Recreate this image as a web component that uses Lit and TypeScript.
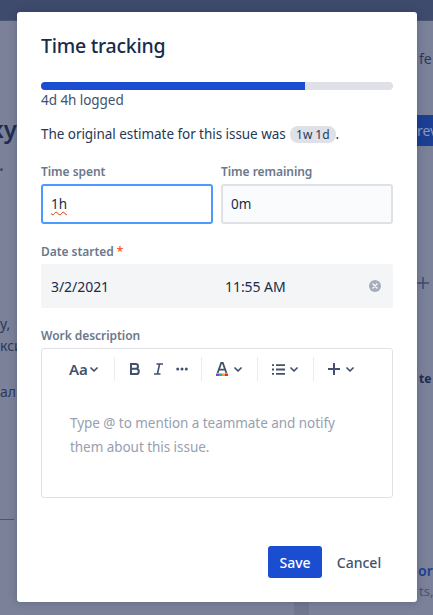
import { LitElement, html, css, svg } from "lit";
import { customElement } from "lit/decorators.js";

const chevron = svg`<path d="M1 1 L4 4 L7 1" fill="none" stroke="#42526e" stroke-width="1.7" stroke-linecap="round" stroke-linejoin="round"/>`;

@customElement("app-root")
export class AppRoot extends LitElement {
  static styles = css`
    :host {
      display: block;
      position: relative;
      width: 433px;
      height: 615px;
      overflow: hidden;
      background: #7b8199;
      font-family: "Noto Sans", sans-serif;
      color: #172b4d;
    }
    .topbar {
      height: 20px;
      background: #3f4b6c;
      border-bottom: 1px solid #4a5576;
    }
    .page {
      display: flex;
      justify-content: space-between;
      height: 594px;
    }
    .left {
      width: 17px;
      overflow: hidden;
      white-space: nowrap;
      color: #202c50;
      display: flex;
      flex-direction: column;
      align-items: flex-start;
    }
    .left .heading {
      align-self: flex-end;
      font-size: 24px;
      font-weight: 600;
      margin-top: 93px;
      line-height: 30px;
    }
    .left .dot {
      width: 3px;
      height: 3px;
      border-radius: 50%;
      background: #3f4b6c;
      margin-top: 24px;
    }
    .left .copy {
      font-size: 14px;
      line-height: 20px;
      color: #2c3859;
    }
    .left .first { margin-top: 143px; }
    .left .second { margin-top: 2px; }
    .left .third { margin-top: 26px; }
    .left .tiny {
      height: 1px;
      width: 14px;
      background: #4a5576;
      margin-top: 117px;
    }
    .right {
      width: 16px;
      overflow: hidden;
      white-space: nowrap;
      display: flex;
      flex-direction: column;
      font-size: 14px;
      color: #2c3859;
    }
    .right .fe { margin-top: 28px; padding-left: 2px; line-height: 20px; }
    .right .rev {
      margin-top: 46px;
      height: 31px;
      line-height: 31px;
      background: #1c3f93;
      color: #8d99bb;
    }
    .right .plus { margin-top: 130px; height: 14px; }
    .right .plus svg { display: block; }
    .right .te {
      margin-top: 81px;
      padding-left: 2px;
      font-size: 12px;
      font-weight: 700;
      line-height: 16px;
      color: #1d2a4e;
    }
    .right .or {
      margin-top: 174px;
      padding-left: 1px;
      font-weight: 600;
      line-height: 20px;
      color: #1c3f93;
    }
    .right .ts {
      margin-top: 2px;
      padding-left: 2px;
      line-height: 16px;
      font-size: 13px;
      color: #4a5576;
    }
    .patch {
      position: absolute;
      left: 294px;
      top: 602px;
      width: 15px;
      height: 13px;
      background: #71778f;
    }

    .modal {
      position: absolute;
      left: 17px;
      top: 12px;
      width: 400px;
      height: 590px;
      box-sizing: border-box;
      padding: 20px 24px 0;
      background: #fff;
      border-radius: 3px;
      box-shadow: 0 0 8px rgba(9, 30, 66, 0.25);
      display: flex;
      flex-direction: column;
      font-size: 13.5px;
      letter-spacing: -0.05px;
    }
    h1 {
      margin: 0;
      font-size: 19.5px;
      font-weight: 500;
      letter-spacing: -0.25px;
      line-height: 28px;
    }
    .bar {
      height: 8px;
      margin-top: 22px;
      border-radius: 4px;
      overflow: hidden;
      background: #dfe1e6;
    }
    .bar div { height: 100%; width: 75%; background: #1a4dcf; }
    .logged { line-height: 20px; color: #42526e; }
    .estimate { line-height: 20px; margin: 14px 0 0; color: #253858; }
    .chip {
      display: inline-block;
      background: #dfe1e6;
      border-radius: 8px;
      font-size: 12px;
      line-height: 17px;
      padding: 0 6px;
      margin-left: 1px;
      color: #253858;
    }
    .row {
      display: grid;
      grid-template-columns: 172px 172px;
      gap: 8px;
      margin-top: 19px;
    }
    label {
      display: block;
      font-size: 12px;
      font-weight: 600;
      line-height: 18px;
      color: #6b778c;
    }
    .req { color: #ff5630; margin-left: 3px; }
    .input {
      box-sizing: border-box;
      height: 40px;
      margin-top: 3px;
      padding: 0 8px;
      border: 2px solid #dfe1e6;
      border-radius: 3px;
      background: #fafbfc;
      line-height: 36px;
      color: #172b4d;
    }
    .input.focus { border-color: #4c9aff; background: #fff; }
    .squiggle {
      text-decoration: underline wavy #de350b 1px;
      text-underline-offset: 2px;
    }
    .date-label { margin-top: 19px; }
    .date {
      display: flex;
      align-items: center;
      height: 44px;
      margin-top: 3px;
      padding: 0 12px 0 10px;
      background: #f4f5f7;
      border-radius: 3px;
      font-size: 14px;
    }
    .date .d { width: 174px; }
    .date .t { flex: 1; }
    .date svg { display: block; }
    .desc-label { margin-top: 19px; }
    .editor {
      box-sizing: border-box;
      height: 150px;
      margin-top: 3px;
      border: 1px solid #dfe1e6;
      border-radius: 3px;
    }
    .toolbar {
      display: flex;
      align-items: center;
      height: 40px;
      padding-left: 27px;
    }
    .toolbar svg { display: block; flex: none; }
    .sep { width: 1px; height: 24px; background: #ebecf0; flex: none; }
    .aa {
      width: 19px;
      font-size: 15px;
      font-weight: 600;
      color: #42526e;
      line-height: 20px;
    }
    .toolbar .ml2 { margin-left: 2px; }
    .toolbar .ml5 { margin-left: 5px; }
    .toolbar .ml6 { margin-left: 6px; }
    .toolbar .ml13 { margin-left: 13px; }
    .toolbar .ml14 { margin-left: 14px; }
    .toolbar .ml15 { margin-left: 15px; }
    .toolbar .mr13 { margin-right: 13px; }
    .toolbar .mr15 { margin-right: 15px; }
    .toolbar .mr16 { margin-right: 16px; }
    .placeholder {
      margin: 22px 28px 0;
      font-size: 13.5px;
      line-height: 24px;
      color: #97a0af;
    }
    .actions {
      display: flex;
      justify-content: flex-end;
      align-items: center;
      margin-top: 48px;
    }
    .btn {
      border: 0;
      background: none;
      font: inherit;
      font-size: 14px;
      font-weight: 500;
      height: 32px;
      border-radius: 3px;
      padding: 0;
    }
    .save { width: 54px; background: #1a4dcf; color: #fff; }
    .cancel { width: 71px; padding-left: 3px; color: #42526e; }
  `;

  render() {
    return html`
      <div class="topbar"></div>
      <div class="page">
        <div class="left">
          <div class="heading">ку</div>
          <div class="dot"></div>
          <div class="copy first">у,</div>
          <div class="copy second">кси</div>
          <div class="copy third">алк</div>
          <div class="tiny"></div>
        </div>
        <div class="right">
          <div class="fe">fe</div>
          <div class="rev">rev</div>
          <div class="plus">
            <svg width="12" height="14" viewBox="0 0 12 14"><path d="M0 7h12M6 1v12" stroke="#3f4b6c" stroke-width="1.5"/></svg>
          </div>
          <div class="te">te</div>
          <div class="or">or</div>
          <div class="ts">ts,</div>
        </div>
      </div>
      <div class="patch"></div>

      <div class="modal">
        <h1>Time tracking</h1>
        <div class="bar"><div></div></div>
        <div class="logged">4d 4h logged</div>
        <p class="estimate">The original estimate for this issue was <span class="chip">1w 1d</span>.</p>
        <div class="row">
          <div>
            <label>Time spent</label>
            <div class="input focus"><span class="squiggle">1h</span></div>
          </div>
          <div>
            <label>Time remaining</label>
            <div class="input">0m</div>
          </div>
        </div>
        <label class="date-label">Date started<span class="req">*</span></label>
        <div class="date">
          <span class="d">3/2/2021</span>
          <span class="t">11:55 AM</span>
          <svg width="12" height="12" viewBox="0 0 12 12">
            <circle cx="6" cy="6" r="6" fill="#a5adba"/>
            <path d="M4 4l4 4M8 4l-4 4" stroke="#f4f5f7" stroke-width="1.6" stroke-linecap="round"/>
          </svg>
        </div>
        <label class="desc-label">Work description</label>
        <div class="editor">
          <div class="toolbar">
            <span class="aa">Aa</span>
            <svg class="ml2 mr16" width="8" height="5" viewBox="0 0 8 5">${chevron}</svg>
            <div class="sep"></div>
            <svg class="ml15" width="10" height="12" viewBox="0 0 10 12"><path d="M1 1h4.6a2.4 2.4 0 0 1 0 4.8H1zM1 5.8h5.2a2.6 2.6 0 0 1 0 5.2H1z" fill="none" stroke="#42526e" stroke-width="2"/></svg>
            <svg class="ml14" width="9" height="12" viewBox="0 0 9 12"><path d="M2.5 1H9M0 11h6.5M5.6 1L3.4 11" fill="none" stroke="#42526e" stroke-width="1.6"/></svg>
            <svg class="ml13 mr13" width="12" height="4" viewBox="0 0 12 4"><circle cx="1.7" cy="2" r="1.5" fill="#42526e"/><circle cx="6" cy="2" r="1.5" fill="#42526e"/><circle cx="10.3" cy="2" r="1.5" fill="#42526e"/></svg>
            <div class="sep"></div>
            <svg class="ml14" width="12" height="14" viewBox="0 0 12 14">
              <path d="M1.6 11L5.2 1h1.6l3.6 10M3 7.6h6" fill="none" stroke="#42526e" stroke-width="1.8"/>
              <rect x="0" y="11.5" width="3" height="2.5" fill="#6554c0"/><rect x="3" y="11.5" width="3" height="2.5" fill="#00b8d9"/>
              <rect x="6" y="11.5" width="3" height="2.5" fill="#ff991f"/><rect x="9" y="11.5" width="3" height="2.5" fill="#de350b"/>
            </svg>
            <svg class="ml6 mr15" width="8" height="5" viewBox="0 0 8 5">${chevron}</svg>
            <div class="sep"></div>
            <svg class="ml14" width="13" height="11" viewBox="0 0 13 11"><path d="M0 1.2h2M0 5.5h2M0 9.8h2M4 1.2h9M4 5.5h9M4 9.8h9" stroke="#42526e" stroke-width="1.8"/></svg>
            <svg class="ml5 mr15" width="8" height="5" viewBox="0 0 8 5">${chevron}</svg>
            <div class="sep"></div>
            <svg class="ml14" width="12" height="12" viewBox="0 0 12 12"><path d="M0 6h12M6 0v12" stroke="#42526e" stroke-width="2"/></svg>
            <svg class="ml6" width="8" height="5" viewBox="0 0 8 5">${chevron}</svg>
          </div>
          <div class="placeholder">Type @ to mention a teammate and notify them about this issue.</div>
        </div>
        <div class="actions">
          <button class="btn save">Save</button>
          <button class="btn cancel">Cancel</button>
        </div>
      </div>
    `;
  }
}
